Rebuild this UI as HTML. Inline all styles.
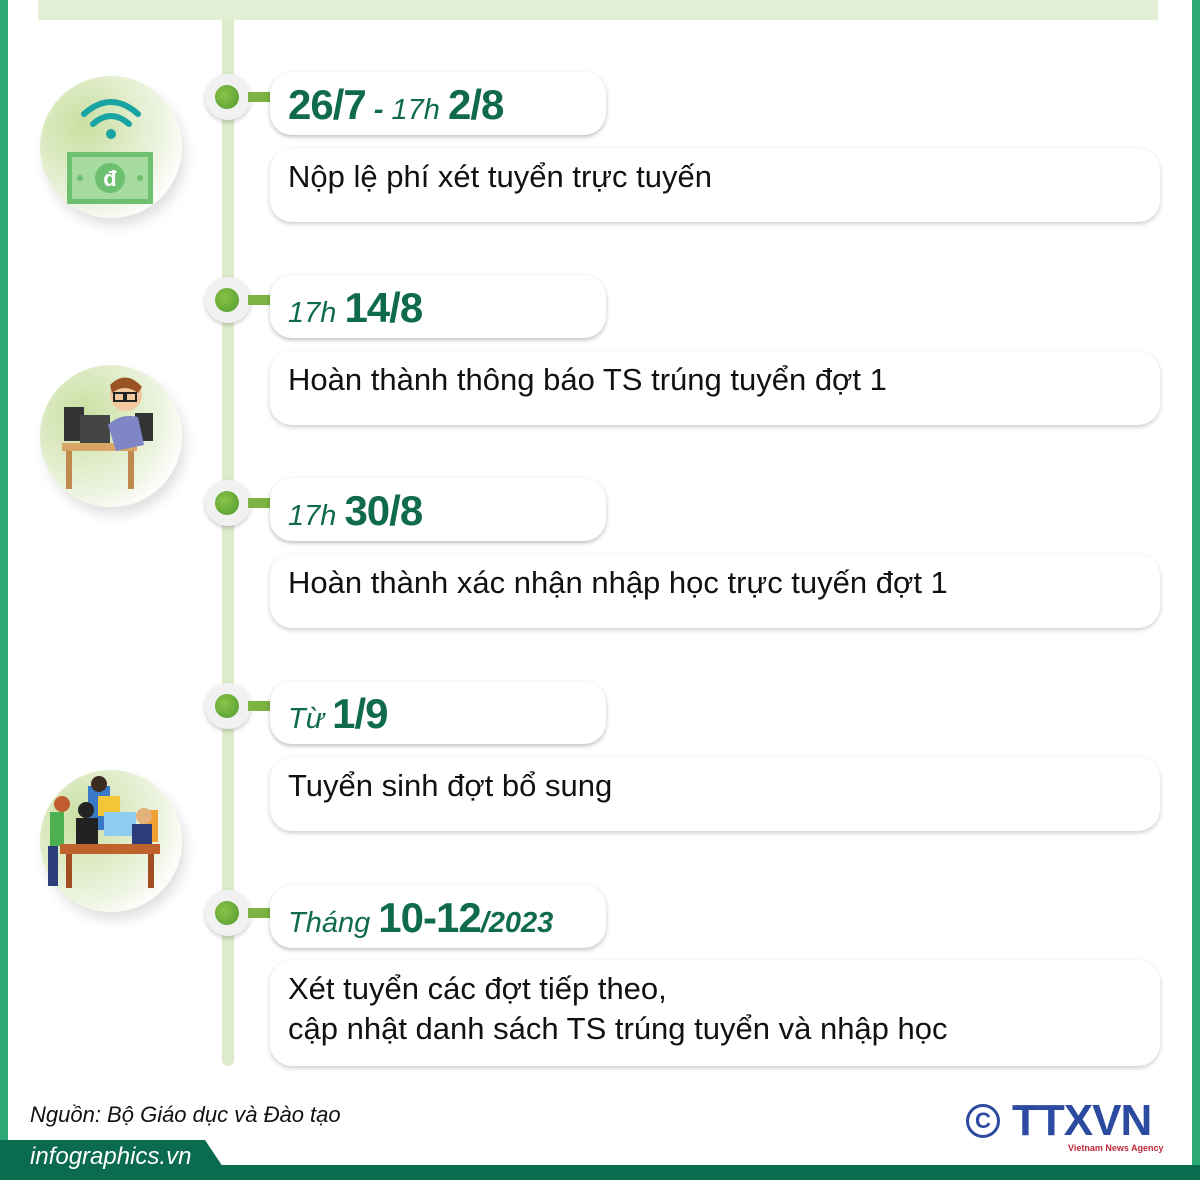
<!DOCTYPE html>
<html><head><meta charset="utf-8"><style>
*{margin:0;padding:0;box-sizing:border-box}
body{width:1200px;height:1180px;position:relative;background:#fff;overflow:hidden;font-family:"Liberation Sans",sans-serif}
.lb{position:absolute;left:0;top:0;width:8px;height:1180px;background:#2aa876}
.rb{position:absolute;right:0;top:0;width:8px;height:1180px;background:#2aa876}
.top{position:absolute;left:38px;top:0;width:1120px;height:20px;background:#e3efd5}
.vl{position:absolute;left:222px;top:20px;width:12px;height:1046px;background:#dcebc9;border-radius:0 0 6px 6px}
.dot{position:absolute;left:205px;width:46px;height:46px;border-radius:50%;background:#f1f1f1;box-shadow:0 2px 4px rgba(0,0,0,.2)}
.dot::after{content:"";position:absolute;left:10px;top:11px;width:24px;height:24px;border-radius:50%;background:radial-gradient(circle at 40% 40%,#8bc34a,#4f9a2c)}
.bar{position:absolute;left:248px;width:26px;height:10px;background:#7cb342}
.pill{position:absolute;left:270px;width:336px;height:63px;border-radius:22px;background:#fff;box-shadow:0 2px 4px rgba(0,0,0,.25);color:#0f6b4b;padding-left:18px;line-height:66px;white-space:nowrap}
.pill b{font-size:42px;font-weight:bold;letter-spacing:-1px}
.pill i{font-size:29px}
.desc{position:absolute;left:270px;width:890px;height:74px;border-radius:22px;background:#fff;box-shadow:0 2px 5px rgba(0,0,0,.2);font-size:31px;color:#111;padding:11px 18px}
.ic{position:absolute;left:40px;width:142px;height:142px;border-radius:50%;background:radial-gradient(circle at 30% 35%,#c9dfa0,#eef4e2 60%,#fff 80%);box-shadow:4px 8px 12px rgba(0,0,0,.12)}
.foot{position:absolute;left:0;top:1165px;width:1200px;height:15px;background:#0b6b4f}
.tab{position:absolute;left:0;top:1140px;width:225px;height:30px;background:#0b6b4f;clip-path:polygon(0 0,205px 0,225px 100%,0 100%)}
</style></head><body>
<div class="lb"></div><div class="rb"></div><div class="top"></div><div class="vl"></div>

<div class="ic" style="top:76px">
<svg width="142" height="142" viewBox="0 0 142 142"><g fill="none" stroke="#1aa3a3" stroke-width="6" stroke-linecap="round"><path d="M44 38 Q71 14 98 38"/><path d="M53 48 Q71 32 89 48"/></g><circle cx="71" cy="58" r="5" fill="#1aa3a3"/><rect x="27" y="76" width="86" height="52" fill="#6cc070"/><rect x="32" y="81" width="76" height="42" fill="#a6dba0"/><circle cx="70" cy="102" r="15" fill="#6cc070"/><text x="70" y="110" text-anchor="middle" font-size="22" font-weight="bold" fill="#fff" font-family="Liberation Sans">đ</text><circle cx="40" cy="102" r="3" fill="#6cc070"/><circle cx="100" cy="102" r="3" fill="#6cc070"/></svg></div>

<div class="ic" style="top:365px">
<svg width="142" height="142" viewBox="0 0 142 142"><rect x="22" y="78" width="75" height="8" fill="#d9a566"/><rect x="26" y="86" width="6" height="38" fill="#c08a4e"/><rect x="88" y="86" width="6" height="38" fill="#c08a4e"/><rect x="24" y="42" width="20" height="34" fill="#333"/><rect x="40" y="50" width="30" height="28" fill="#444"/><rect x="95" y="48" width="18" height="28" fill="#333"/><path d="M68 60 Q80 48 98 52 L104 80 L76 86 Z" fill="#7f86c5"/><circle cx="86" cy="30" r="16" fill="#f2c8a0"/><path d="M70 20 Q86 4 102 22 L98 28 Q84 18 72 28Z" fill="#9a5423"/><rect x="74" y="28" width="10" height="8" fill="none" stroke="#222" stroke-width="2"/><rect x="86" y="28" width="10" height="8" fill="none" stroke="#222" stroke-width="2"/></svg></div>

<div class="ic" style="top:770px">
<svg width="142" height="142" viewBox="0 0 142 142"><rect x="48" y="16" width="22" height="44" fill="#3a78c8"/><circle cx="59" cy="14" r="8" fill="#3b2a20"/><rect x="58" y="26" width="22" height="20" fill="#f3c637"/><rect x="10" y="42" width="14" height="34" fill="#4caf50"/><rect x="8" y="76" width="10" height="40" fill="#2d3e7a"/><circle cx="22" cy="34" r="8" fill="#c15c2e"/><rect x="36" y="48" width="22" height="26" fill="#222"/><circle cx="46" cy="40" r="8" fill="#222"/><rect x="64" y="42" width="32" height="24" fill="#8ecdf0"/><rect x="100" y="40" width="18" height="32" fill="#f0a032"/><rect x="92" y="54" width="20" height="24" fill="#2e3d7a"/><circle cx="104" cy="46" r="8" fill="#e3b17a"/><rect x="20" y="74" width="100" height="10" fill="#c0622c"/><rect x="26" y="84" width="6" height="34" fill="#a34e22"/><rect x="108" y="84" width="6" height="34" fill="#a34e22"/></svg></div>

<div class="dot" style="top:74px"></div><div class="bar" style="top:92px"></div>
<div class="pill" style="top:72px"><b>26/7</b><i style="font-weight:bold"> - </i><i>17h </i><b>2/8</b></div>
<div class="desc" style="top:148px">Nộp lệ phí xét tuyển trực tuyến</div>

<div class="dot" style="top:277px"></div><div class="bar" style="top:295px"></div>
<div class="pill" style="top:275px"><i>17h </i><b>14/8</b></div>
<div class="desc" style="top:351px">Hoàn thành thông báo TS trúng tuyển đợt 1</div>

<div class="dot" style="top:480px"></div><div class="bar" style="top:498px"></div>
<div class="pill" style="top:478px"><i>17h </i><b>30/8</b></div>
<div class="desc" style="top:554px">Hoàn thành xác nhận nhập học trực tuyến đợt 1</div>

<div class="dot" style="top:683px"></div><div class="bar" style="top:701px"></div>
<div class="pill" style="top:681px"><i>Từ </i><b>1/9</b></div>
<div class="desc" style="top:757px">Tuyển sinh đợt bổ sung</div>

<div class="dot" style="top:890px"></div><div class="bar" style="top:908px"></div>
<div class="pill" style="top:885px"><i>Tháng </i><b>10-12</b><i style="font-weight:bold">/2023</i></div>
<div class="desc" style="top:960px;height:106px;line-height:40px;padding-top:9px">Xét tuyển các đợt tiếp theo,<br>cập nhật danh sách TS trúng tuyển và nhập học</div>

<div style="position:absolute;left:30px;top:1102px;font-size:22px;font-style:italic;color:#111">Nguồn: Bộ Giáo dục và Đào tạo</div>
<div style="position:absolute;left:966px;top:1104px;width:34px;height:34px;border:3px solid #2b4aa0;border-radius:50%;color:#2b4aa0;font-weight:bold;font-size:22px;text-align:center;line-height:28px">C</div>
<div style="position:absolute;left:1012px;top:1098px;font-size:44px;font-weight:bold;color:#2b4aa0;letter-spacing:-1px;line-height:46px">TTXVN</div>
<div style="position:absolute;left:1068px;top:1143px;font-size:9px;font-weight:bold;color:#c02a3a">Vietnam News Agency</div>
<div class="foot"></div><div class="tab"></div>
<div style="position:absolute;left:30px;top:1143px;font-size:24px;font-style:italic;color:#fff">infographics.vn</div>
</body></html>
